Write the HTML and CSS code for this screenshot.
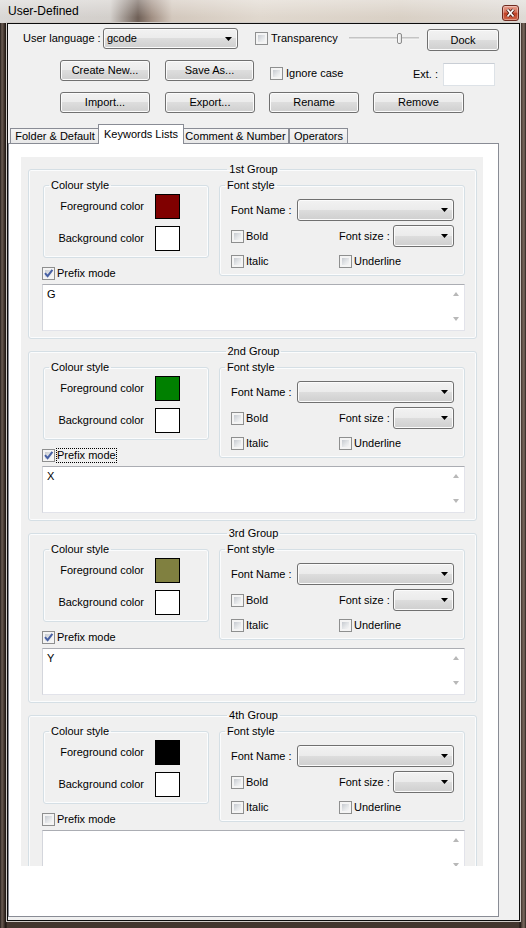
FILE: index.html
```html
<!DOCTYPE html>
<html lang="en">
<head>
    <meta charset="UTF-8">
    <meta name="viewport" content="width=device-width, initial-scale=1.0">
    <title>User-Defined</title>
    <link rel="stylesheet" href="styles.css">
</head>
<body>
    <div class="window">
        <div class="titlebar">
            <span class="title">User-Defined</span>
            <span class="close">
                <svg width="15" height="14" viewBox="0 0 15 14">
                    <path d="M4.5 3.5l6 7M10.5 3.5l-6 7" stroke="#4a1c14" stroke-width="3.4" fill="none"/>
                    <path d="M4.5 3.5l6 7M10.5 3.5l-6 7" stroke="#fff" stroke-width="1.7" fill="none"/>
                </svg>
            </span>
        </div>

        <div class="client">
            <div class="row row1">
                <span class="lang-label">User language :</span>
                <div class="combo lang-combo">
                    <span>gcode</span>
                    <svg class="arrow" width="7" height="4" viewBox="0 0 7 4"><path d="M0 0h7L3.5 4z"/></svg>
                </div>
                <label class="check transp"><span class="box"></span>Transparency</label>
                <div class="slider">
                    <span class="track track-left"></span>
                    <span class="thumb"></span>
                    <span class="track track-right"></span>
                </div>
                <button class="btn dock">Dock</button>
            </div>

            <div class="row row2">
                <button class="btn">Create New...</button>
                <button class="btn save">Save As...</button>
                <label class="check ignore"><span class="box"></span>Ignore case</label>
                <div class="ext">
                    <span>Ext. :</span>
                    <span class="ext-input"></span>
                </div>
            </div>

            <div class="row row3">
                <button class="btn">Import...</button>
                <button class="btn export">Export...</button>
                <button class="btn rename">Rename</button>
                <button class="btn remove">Remove</button>
            </div>

            <div class="tabs">
                <div class="tab tab-folder">Folder &amp; Default</div>
                <div class="tab active">Keywords Lists</div>
                <div class="tab tab-comment">Comment &amp; Number</div>
                <div class="tab tab-ops">Operators</div>
            </div>

            <div class="panel">
                <div class="scroller">

                    <fieldset class="group">
                        <legend>1st Group</legend>
                        <div class="group-top">
                            <div class="left-col">
                                <fieldset class="sub colour">
                                    <legend>Colour style</legend>
                                    <div class="crow"><span>Foreground color</span><span class="swatch" style="background: #800000;"></span></div>
                                    <div class="crow"><span>Background color</span><span class="swatch"></span></div>
                                </fieldset>
                                <label class="check prefix"><span class="box"><svg width="11" height="11" viewBox="0 0 11 11"><path d="M2 5.2l2.6 3 4.8-6.4" fill="none" stroke="#4760a4" stroke-width="2"/></svg></span>Prefix mode</label>
                            </div>
                            <fieldset class="sub font">
                                <legend>Font style</legend>
                                <div class="frow">
                                    <span>Font Name :</span>
                                    <div class="combo name-combo"><svg class="arrow" width="7" height="4" viewBox="0 0 7 4"><path d="M0 0h7L3.5 4z"/></svg></div>
                                </div>
                                <div class="fgrid">
                                    <label class="check"><span class="box"></span>Bold</label>
                                    <div class="size">
                                        <span>Font size :</span>
                                        <div class="combo size-combo"><svg class="arrow" width="7" height="4" viewBox="0 0 7 4"><path d="M0 0h7L3.5 4z"/></svg></div>
                                    </div>
                                </div>
                                <div class="fgrid frow3">
                                    <label class="check"><span class="box"></span>Italic</label>
                                    <label class="check"><span class="box"></span>Underline</label>
                                </div>
                            </fieldset>
                        </div>
                        <div class="edit">
                            <span class="edit-text">G</span>
                            <span class="vsb"><i class="up"></i><i class="down"></i></span>
                        </div>
                    </fieldset>

                    <fieldset class="group">
                        <legend>2nd Group</legend>
                        <div class="group-top">
                            <div class="left-col">
                                <fieldset class="sub colour">
                                    <legend>Colour style</legend>
                                    <div class="crow"><span>Foreground color</span><span class="swatch" style="background: #008000;"></span></div>
                                    <div class="crow"><span>Background color</span><span class="swatch"></span></div>
                                </fieldset>
                                <label class="check prefix"><span class="box"><svg width="11" height="11" viewBox="0 0 11 11"><path d="M2 5.2l2.6 3 4.8-6.4" fill="none" stroke="#4760a4" stroke-width="2"/></svg></span><span class="focus">Prefix mode</span></label>
                            </div>
                            <fieldset class="sub font">
                                <legend>Font style</legend>
                                <div class="frow">
                                    <span>Font Name :</span>
                                    <div class="combo name-combo"><svg class="arrow" width="7" height="4" viewBox="0 0 7 4"><path d="M0 0h7L3.5 4z"/></svg></div>
                                </div>
                                <div class="fgrid">
                                    <label class="check"><span class="box"></span>Bold</label>
                                    <div class="size">
                                        <span>Font size :</span>
                                        <div class="combo size-combo"><svg class="arrow" width="7" height="4" viewBox="0 0 7 4"><path d="M0 0h7L3.5 4z"/></svg></div>
                                    </div>
                                </div>
                                <div class="fgrid frow3">
                                    <label class="check"><span class="box"></span>Italic</label>
                                    <label class="check"><span class="box"></span>Underline</label>
                                </div>
                            </fieldset>
                        </div>
                        <div class="edit">
                            <span class="edit-text">X</span>
                            <span class="vsb"><i class="up"></i><i class="down"></i></span>
                        </div>
                    </fieldset>

                    <fieldset class="group">
                        <legend>3rd Group</legend>
                        <div class="group-top">
                            <div class="left-col">
                                <fieldset class="sub colour">
                                    <legend>Colour style</legend>
                                    <div class="crow"><span>Foreground color</span><span class="swatch" style="background: #808040;"></span></div>
                                    <div class="crow"><span>Background color</span><span class="swatch"></span></div>
                                </fieldset>
                                <label class="check prefix"><span class="box"><svg width="11" height="11" viewBox="0 0 11 11"><path d="M2 5.2l2.6 3 4.8-6.4" fill="none" stroke="#4760a4" stroke-width="2"/></svg></span>Prefix mode</label>
                            </div>
                            <fieldset class="sub font">
                                <legend>Font style</legend>
                                <div class="frow">
                                    <span>Font Name :</span>
                                    <div class="combo name-combo"><svg class="arrow" width="7" height="4" viewBox="0 0 7 4"><path d="M0 0h7L3.5 4z"/></svg></div>
                                </div>
                                <div class="fgrid">
                                    <label class="check"><span class="box"></span>Bold</label>
                                    <div class="size">
                                        <span>Font size :</span>
                                        <div class="combo size-combo"><svg class="arrow" width="7" height="4" viewBox="0 0 7 4"><path d="M0 0h7L3.5 4z"/></svg></div>
                                    </div>
                                </div>
                                <div class="fgrid frow3">
                                    <label class="check"><span class="box"></span>Italic</label>
                                    <label class="check"><span class="box"></span>Underline</label>
                                </div>
                            </fieldset>
                        </div>
                        <div class="edit">
                            <span class="edit-text">Y</span>
                            <span class="vsb"><i class="up"></i><i class="down"></i></span>
                        </div>
                    </fieldset>

                    <fieldset class="group">
                        <legend>4th Group</legend>
                        <div class="group-top">
                            <div class="left-col">
                                <fieldset class="sub colour">
                                    <legend>Colour style</legend>
                                    <div class="crow"><span>Foreground color</span><span class="swatch" style="background: #000000;"></span></div>
                                    <div class="crow"><span>Background color</span><span class="swatch"></span></div>
                                </fieldset>
                                <label class="check prefix"><span class="box"></span>Prefix mode</label>
                            </div>
                            <fieldset class="sub font">
                                <legend>Font style</legend>
                                <div class="frow">
                                    <span>Font Name :</span>
                                    <div class="combo name-combo"><svg class="arrow" width="7" height="4" viewBox="0 0 7 4"><path d="M0 0h7L3.5 4z"/></svg></div>
                                </div>
                                <div class="fgrid">
                                    <label class="check"><span class="box"></span>Bold</label>
                                    <div class="size">
                                        <span>Font size :</span>
                                        <div class="combo size-combo"><svg class="arrow" width="7" height="4" viewBox="0 0 7 4"><path d="M0 0h7L3.5 4z"/></svg></div>
                                    </div>
                                </div>
                                <div class="fgrid frow3">
                                    <label class="check"><span class="box"></span>Italic</label>
                                    <label class="check"><span class="box"></span>Underline</label>
                                </div>
                            </fieldset>
                        </div>
                        <div class="edit">
                            <span class="edit-text"></span>
                            <span class="vsb"><i class="up"></i><i class="down"></i></span>
                        </div>
                    </fieldset>

                </div>
            </div>
        </div>
    </div>
</body>
</html>
```

FILE: styles.css
```css
body {
    margin: 0;
    font-family: "Liberation Sans", Arial, sans-serif;
    font-size: 11px;
    line-height: 13px;
    color: #000;
    background: #3b2f28;
}
.window {
    width: 526px;
    height: 928px;
    box-sizing: border-box;
    padding: 0 6px 7px 7px;
    display: flex;
    flex-direction: column;
    background: linear-gradient(to right, #241c18 0, #6b5d54 2px, #43362e 4px, #17110e 6px, #43362e 7px, #43362e 519px, #17110e 520px, #5a4b42 522px, #7a6a5f 524px, #2a211c 526px);
}
.titlebar {
    flex: none;
    height: 23px;
    margin: 0 -6px 0 -7px;
    padding: 0 7px 0 8px;
    display: flex;
    justify-content: space-between;
    align-items: flex-start;
    background:
        linear-gradient(rgba(255,255,255,0.35), rgba(255,255,255,0) 75%),
        linear-gradient(to right, #d9d7d5 0, #d3cfcb 110px, #6f6057 138px, #a29084 152px, #d3c8bd 172px, #e0d8ce 260px, #d9d0c5 400px, #dedad5 526px);
}
.title {
    font-size: 12px;
    line-height: 23px;
}
.close {
    margin-top: 5px;
    width: 17px;
    height: 16px;
    box-sizing: border-box;
    border: 1px solid #6e2a20;
    border-radius: 3px;
    background: linear-gradient(#e8a08e 0, #d4705a 45%, #bf4024 50%, #cf6448 100%);
    box-shadow: inset 0 0 0 1px rgba(255,255,255,0.35);
    display: flex;
    align-items: center;
    justify-content: center;
}
.close svg {
    display: block;
}
.client {
    flex: 1;
    border: 1px solid #0c0c0c;
    background: #f0f0f0;
    box-shadow: 0 0 0 1px #d0cbc7;
}

/* top controls */
.row {
    display: flex;
    align-items: flex-start;
}
.row1 {
    margin-top: 4px;
    padding-left: 15px;
}
.row2 {
    margin-top: 9px;
    padding: 0 24px 0 52px;
}
.row3 {
    margin-top: 6px;
    padding-left: 52px;
}
.lang-label {
    width: 80px;
    line-height: 21px;
}
.btn {
    width: 90px;
    height: 21px;
    padding: 0;
    box-sizing: border-box;
    border: 1px solid #707070;
    border-radius: 3px;
    background: linear-gradient(#f2f2f2 0, #ebebeb 50%, #dddddd 50%, #cfcfcf 100%);
    box-shadow: inset 0 0 0 1px #fbfbfb;
    font: inherit;
    color: #000;
}
.dock {
    width: 72px;
    height: 22px;
    margin: 1px 0 0 8px;
}
.save {
    width: 89px;
    margin-left: 15px;
}
.export {
    margin-left: 15px;
}
.rename {
    margin-left: 14px;
}
.remove {
    width: 91px;
    margin-left: 14px;
}
.combo {
    height: 21px;
    box-sizing: border-box;
    border: 1px solid #707070;
    border-radius: 3px;
    background: linear-gradient(#f2f2f2 0, #ebebeb 50%, #dddddd 50%, #cfcfcf 100%);
    box-shadow: inset 0 0 0 1px #fbfbfb;
    display: flex;
    align-items: center;
    justify-content: flex-end;
    padding: 0 5px 0 3px;
}
.lang-combo {
    width: 135px;
    justify-content: space-between;
}
.arrow {
    display: block;
    flex: none;
}
.check {
    display: flex;
    align-items: center;
    gap: 3px;
    white-space: nowrap;
}
.box {
    flex: none;
    width: 13px;
    height: 13px;
    box-sizing: border-box;
    border: 1px solid #8e8f8f;
    padding: 2px;
    background: linear-gradient(135deg, #c6cad0 0, #e6e8ea 60%, #f6f6f6 100%) content-box, #f4f4f4;
}
.box svg {
    display: block;
    margin: -2px;
}
.transp {
    width: 94px;
    height: 21px;
    margin-left: 17px;
}
.slider {
    width: 70px;
    height: 21px;
    display: flex;
    align-items: center;
}
.track {
    height: 3px;
    box-sizing: border-box;
    border-top: 1px solid #c4c4c4;
    border-bottom: 1px solid #f4f4f4;
    background: #dcdcdc;
}
.track-left {
    width: 48px;
}
.track-right {
    flex: 1;
}
.thumb {
    width: 5px;
    height: 11px;
    box-sizing: border-box;
    border: 1px solid #8c8c8c;
    border-radius: 2px;
    background: linear-gradient(to right, #ffffff, #e2e2e2);
}
.ignore {
    margin: 7px 0 0 16px;
}
.ext {
    margin: 3px 0 0 auto;
    height: 23px;
    display: flex;
    align-items: center;
    gap: 5px;
}
.ext-input {
    width: 52px;
    height: 23px;
    box-sizing: border-box;
    border: 1px solid #dde2e7;
    border-top-color: #c9ced5;
    background: #fff;
}

/* tabs */
.tabs {
    margin-top: 11px;
    height: 19px;
    padding-left: 2px;
    display: flex;
    align-items: flex-end;
}
.tab {
    height: 15px;
    box-sizing: border-box;
    border: 1px solid #898c95;
    border-bottom: none;
    background: linear-gradient(#f5f5f5, #e8e8e8);
    display: flex;
    align-items: center;
    justify-content: center;
    white-space: nowrap;
}
.tab-folder {
    width: 90px;
}
.tab.active {
    position: relative;
    z-index: 1;
    width: 86px;
    height: 20px;
    margin: 0 -2px -1px;
    padding-bottom: 1px;
    background: #fff;
}
.tab-comment {
    width: 107px;
}
.tab-ops {
    width: 59px;
}
.panel {
    width: 491px;
    height: 774px;
    box-sizing: border-box;
    border: 1px solid #898c95;
    background: #fff;
    padding: 13px 0 0 12px;
}
.scroller {
    width: 462px;
    height: 709px;
    box-sizing: border-box;
    padding: 6px 0 0 7px;
    background: #f0f0f0;
    overflow: hidden;
}

/* group boxes */
fieldset {
    margin: 0;
    min-width: 0;
    box-sizing: border-box;
    border: 1px solid #d5dfe5;
    border-radius: 3px;
    box-shadow: inset 0 0 0 1px #fbfcfd;
}
legend {
    padding: 0 2px;
    line-height: 13px;
}
.group {
    width: 449px;
    margin-bottom: 6px;
    padding: 3px 11px 7px 13px;
}
.group > legend {
    margin: 0 auto;
}
.sub > legend {
    margin-left: 5px;
}
.group-top {
    display: flex;
    align-items: flex-start;
}
.colour {
    width: 166px;
    margin-left: 1px;
    padding: 2px 28px 6px 0;
}
.crow {
    display: flex;
    align-items: center;
    justify-content: flex-end;
    gap: 11px;
    height: 25px;
}
.crow + .crow {
    margin-top: 7px;
}
.swatch {
    width: 25px;
    height: 25px;
    box-sizing: border-box;
    border: 1px solid #000;
    background: #fff;
}
.prefix {
    margin-top: 9px;
    height: 13px;
    gap: 2px;
}
.focus {
    outline: 1px dotted #000;
    outline-offset: 0;
}
.font {
    width: 246px;
    margin-left: 10px;
    padding: 7px 10px 7px 0;
}
.frow {
    margin-left: 11px;
    height: 22px;
    display: flex;
    align-items: center;
    justify-content: space-between;
}
.name-combo {
    width: 157px;
    height: 22px;
}
.fgrid {
    margin: 4px 0 0 11px;
    height: 22px;
    display: grid;
    grid-template-columns: 108px 1fr;
    align-items: center;
}
.fgrid .check {
    gap: 2px;
}
.frow3 {
    margin-top: 8px;
    height: 13px;
}
.size {
    display: flex;
    align-items: center;
    justify-content: space-between;
}
.size-combo {
    width: 61px;
    height: 22px;
}
.edit {
    margin-top: 4px;
    height: 47px;
    box-sizing: border-box;
    border: 1px solid #e2e3ea;
    border-top-color: #abadb3;
    border-left-color: #d4d6dc;
    background: #fff;
    display: flex;
}
.edit-text {
    flex: 1;
    padding: 3px 0 0 4px;
}
.vsb {
    width: 17px;
    display: flex;
    flex-direction: column;
    align-items: center;
    justify-content: space-between;
    padding: 7px 0 9px;
}
.vsb i {
    width: 0;
    height: 0;
    border-left: 3px solid transparent;
    border-right: 3px solid transparent;
}
.vsb .up {
    border-bottom: 4px solid #b8b8b8;
}
.vsb .down {
    border-top: 4px solid #b8b8b8;
}
```
